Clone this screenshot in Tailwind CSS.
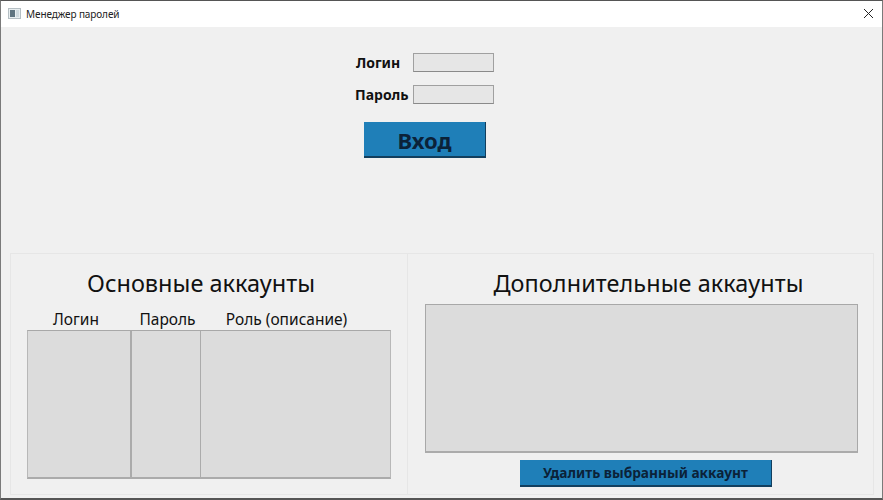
<!DOCTYPE html>
<html lang="ru">
<head>
<meta charset="utf-8">
<script src="https://cdn.jsdelivr.net/npm/@tailwindcss/browser@4"></script>
<title>Менеджер паролей</title>
</head>
<body class="bg-[#f0f0f0]">
<div class="w-[883px] h-[500px] overflow-hidden flex flex-col bg-[#f0f0f0] border border-[#7a7a7a] border-t-[#555555] border-b-2 border-b-[#555555] font-['Noto_Sans',sans-serif] text-black">
  <header class="h-[26px] shrink-0 bg-white flex items-center pl-[7px] pr-[9px]">
    <svg width="13" height="13" viewBox="0 0 13 13" class="shrink-0 mt-[-2px]">
      <rect x="0.5" y="1.5" width="12" height="10" fill="#e8eef0" stroke="#b5bfc4"/>
      <rect x="2" y="3" width="5" height="7" fill="#5f7480"/>
      <rect x="8" y="3" width="3" height="7" fill="#cfdadf"/>
    </svg>
    <span class="ml-[5px] mt-[-1px] text-[10px] leading-none tracking-[-0.1px] text-[#222222]">Менеджер паролей</span>
    <svg width="9" height="9" viewBox="0 0 9 9" class="ml-auto mt-[-1px]" fill="none" stroke="#222222" stroke-width="1"><path d="M0 0 9 9M9 0 0 9"/></svg>
  </header>

  <section class="h-[226px] shrink-0 pt-[26px] flex flex-col items-center">
    <div class="w-[139px] ml-[-34px] flex flex-col gap-[13px]">
      <div class="flex items-center h-[19px]">
        <label class="w-[58px] pl-[1px] text-[14px] leading-none font-bold text-[#111111]">Логин</label>
        <div class="w-[81px] h-[19px] bg-[#e6e6e6] border border-[#a0a0a0] border-b-[#8a8a8a]"></div>
      </div>
      <div class="flex items-center h-[19px]">
        <label class="w-[58px] pt-[1px] text-[14px] leading-none font-bold text-[#111111]">Пароль</label>
        <div class="w-[81px] h-[19px] bg-[#e6e6e6] border border-[#a0a0a0] border-b-[#8a8a8a]"></div>
      </div>
    </div>
    <button class="mt-[18px] ml-[-33px] w-[122px] h-[36px] pt-[1px] bg-[#1f7fb8] border-r border-b-2 border-[#123f5e] text-[22px] leading-none font-bold text-[#0b2238]">Вход</button>
  </section>

  <main class="ml-[9px] w-[864px] h-[242px] shrink-0 border border-[#e6e6e6] grid grid-cols-[397px_1fr]">
    <div class="border-r border-[#e6e6e6] pl-[16px] pt-[13px] flex flex-col">
      <h2 class="w-[348px] text-center text-[23.5px] leading-[32px] text-[#111111]">Основные аккаунты</h2>
      <div class="w-[364px] h-[31px] pt-[11px] grid grid-cols-[104px_69px_1fr] items-center text-[15.5px] leading-none text-[#111111]">
        <span class="text-center pr-[6px]">Логин</span>
        <span class="text-center pl-[4px]">Пароль</span>
        <span class="text-center pr-[18px]">Роль (описание)</span>
      </div>
      <div class="w-[364px] h-[149px] grid grid-cols-[104px_69px_1fr] bg-[#dcdcdc] border-t border-[#a8a8a8] border-b-2 border-b-[#ababab] border-x border-x-[#b8b8b8]">
        <div class="border-r-2 border-[#ababab]"></div>
        <div class="border-r border-[#ababab]"></div>
        <div></div>
      </div>
    </div>
    <div class="pl-[17px] pt-[13px] flex flex-col">
      <h2 class="w-[447px] text-center text-[23.4px] leading-[32px] text-[#111111] tracking-[0.1px]">Дополнительные аккаунты</h2>
      <div class="w-[433px] h-[149px] mt-[5px] bg-[#dcdcdc] border border-[#a8a8a8] border-b-2 border-b-[#ababab]"></div>
      <button class="mt-[7px] ml-[95px] w-[252px] h-[27px] bg-[#1f7fb8] border-r border-b-2 border-[#123f5e] text-[13.7px] leading-none font-bold text-[#0b2238]">Удалить выбранный аккаунт</button>
    </div>
  </main>
</div>
</body>
</html>
